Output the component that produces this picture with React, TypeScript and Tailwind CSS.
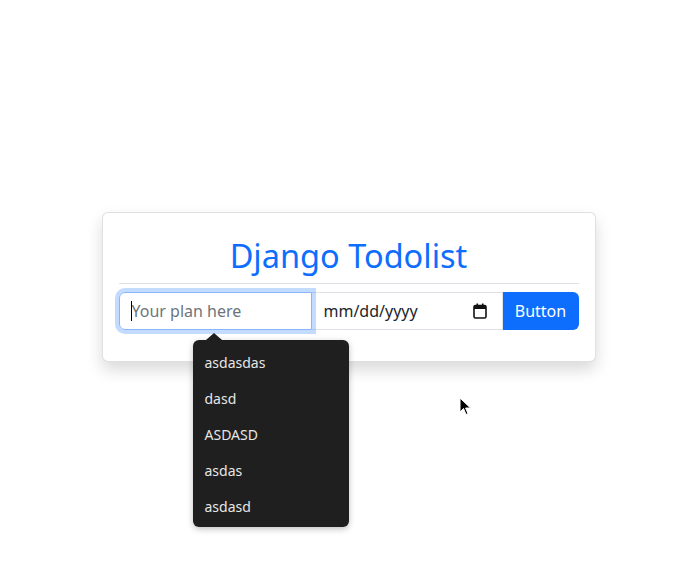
import { useState } from "react"

const plans = ["asdasdas", "dasd", "ASDASD", "asdas", "asdasd"]

export default function App() {
  const [plan, setPlan] = useState("")

  return (
    <div
      className="relative flex min-h-screen items-center justify-center bg-white"
      style={{ fontFamily: '"Noto Sans", "Open Sans", sans-serif' }}
    >
      <div className="w-[494px] rounded-md border border-black/[0.12] bg-white px-4 pt-[23px] pb-[31px] shadow-[0_8px_16px_rgba(0,0,0,0.15)]">
        <h1 className="text-center text-[32.5px] leading-[39px] text-[#0d6efd]">Django Todolist</h1>
        <hr className="mt-2 mb-2 border-t border-[#dee2e6]" />

        {/* Input group */}
        <div className="relative flex h-[38px]">
          <div className="relative z-10 w-[193px]">
            <input
              value={plan}
              onChange={(e) => setPlan(e.target.value)}
              placeholder="Your plan here"
              className="h-full w-full rounded-l-md border border-[#86b7fe] px-3 text-base text-[#212529] outline-none ring-4 ring-[#0d6efd]/25 placeholder:text-[#6c757d]"
            />
            {plan === "" && <span className="absolute top-[9px] left-[12px] h-[20px] w-px bg-black" />}
          </div>
          <div className="-ml-px flex w-[192px] items-center justify-between border border-[#dee2e6] pl-3 pr-[15px] text-base text-[#212529]">
            <span>mm/dd/yyyy</span>
            <svg width="14" height="16" viewBox="0 0 14 16" fill="none">
              <rect x="1" y="2.5" width="12" height="12.5" rx="1.5" stroke="#111" strokeWidth="1.6" />
              <rect x="1" y="2.5" width="12" height="3.5" fill="#111" />
              <rect x="3.5" y="0.5" width="1.6" height="3" fill="#111" />
              <rect x="8.9" y="0.5" width="1.6" height="3" fill="#111" />
            </svg>
          </div>
          <button className="flex-1 rounded-r-md bg-[#0d6efd] text-base text-white">Button</button>

          {/* Datalist popup */}
          <div className="absolute top-[48px] left-[74px] z-20 w-[156px] rounded-md bg-[#1f1f1f] pt-[5px] pb-[2px] shadow-[0_2px_6px_rgba(0,0,0,0.25)]">
            <div className="absolute -top-[7px] left-[13px] h-0 w-0 border-x-[8px] border-b-[7px] border-x-transparent border-b-[#1f1f1f]" />
            {plans.map((p) => (
              <div key={p} className="px-3 text-[14px] leading-[36px] text-[#e6e6e6]">
                {p}
              </div>
            ))}
          </div>
        </div>
      </div>

      {/* mouse pointer */}
      <svg className="absolute top-[397px] left-[459px]" width="13" height="20" viewBox="0 0 13 20">
        <path d="M1 1 L1 15 L4.5 11.5 L7 17.5 L9 16.6 L6.6 11 L11.5 11 Z" fill="#000" stroke="#fff" strokeWidth="1" />
      </svg>
    </div>
  )
}
